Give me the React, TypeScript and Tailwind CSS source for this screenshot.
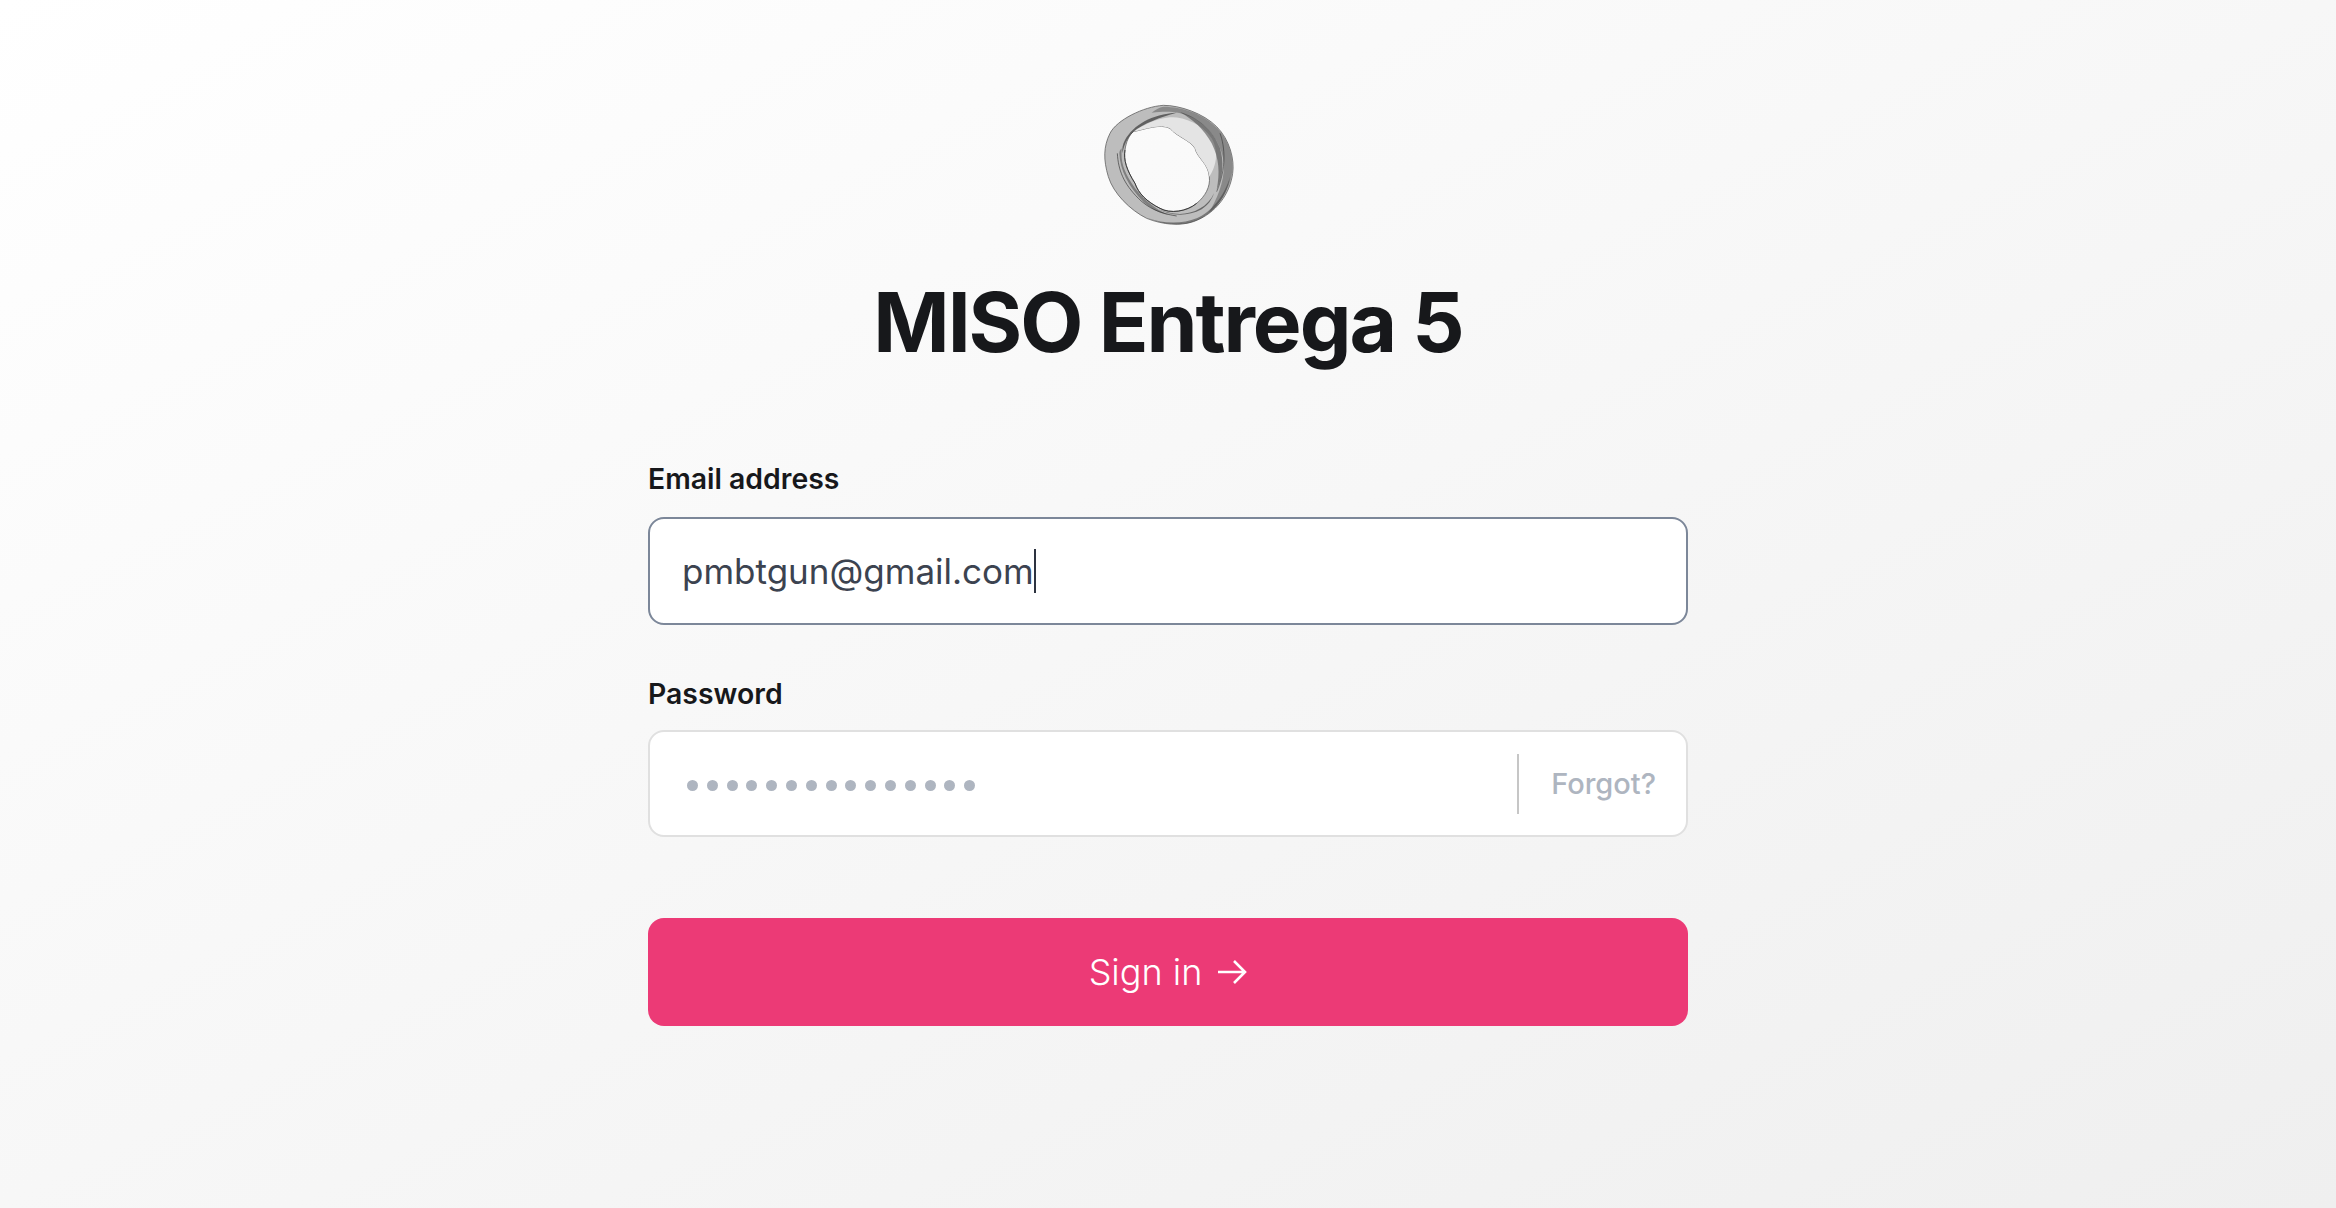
import React from "react";

const outer = "M250 46C300 46 370 70 410 110C450 150 464 210 458 250C450 310 410 370 340 395C300 408 250 405 200 385C150 360 100 310 85 260C70 210 70 170 90 130C110 90 190 50 250 46Z";
const hole = "M160 125C195 118 240 100 270 115C290 140 330 150 345 175C352 205 385 220 388 260C392 290 375 320 350 340C320 365 270 372 240 355C200 335 175 310 165 280C140 240 130 210 135 180C138 155 148 135 160 125Z";

function Logo() {
  return (
    <svg width="180" height="150" viewBox="-6 0 540 450" className="block blur-[0.4px]">
      <path d={`${outer}${hole}`} fillRule="evenodd" fill="#bdbdbd" stroke="#666" strokeWidth="2.5" />
      <path d="M270 115C290 140 330 150 345 175C352 205 385 220 388 260C405 235 420 190 395 145C365 100 310 80 270 82C230 85 190 105 160 125C195 118 240 100 270 115Z" fill="#e4e4e4" />
      <path d="M250 50C310 50 375 75 412 115C450 155 462 210 456 250C448 300 420 345 385 370C410 330 432 280 432 225C428 165 390 110 335 82C300 66 270 62 215 68C225 60 238 52 250 50Z" fill="#555" opacity="0.5" />
      <path d="M300 66C350 80 400 120 420 175C432 215 430 260 410 300C420 250 418 205 395 160C370 115 340 90 300 66Z" fill="#222" opacity="0.45" />
      <path d="M135 150C160 105 215 72 290 68C240 82 190 100 160 125C140 145 130 170 128 190C125 178 128 163 135 150Z" fill="#222" opacity="0.6" />
      <path d="M118 190C120 240 145 290 190 335C215 358 240 370 270 376C225 360 180 320 155 280C130 240 122 215 125 175C120 180 118 185 118 190Z" fill="#333" opacity="0.45" />
      <path d="M205 385C250 402 310 402 350 385C395 365 435 315 450 260C440 325 395 380 330 398C285 408 240 400 205 385Z" fill="#333" opacity="0.5" />
      <path d="M230 355C270 378 320 382 365 358C385 345 395 330 402 310C385 350 340 372 300 372C275 372 250 365 230 355Z" fill="#111" opacity="0.5" />
      <path d="M135 180C130 210 140 240 165 280C175 310 200 335 240 355C270 372 320 365 350 340" fill="none" stroke="#222" strokeWidth="3" opacity="0.75" />
      <path d="M112 190C115 240 130 280 175 325C205 355 240 370 290 378" fill="none" stroke="#222" strokeWidth="2.5" opacity="0.7" />
      <path d="M420 130C435 170 440 235 410 305" fill="none" stroke="#222" strokeWidth="2.5" opacity="0.6" />
    </svg>
  );
}

export default function App() {
  return (
    <div className="min-h-[1208px] bg-linear-to-br from-white to-[#efefef] font-['Inter',sans-serif] flex flex-col items-center pt-[90px] text-[#17181b]">
      <Logo />
      <h1 className="mt-[33px] text-[82px] leading-[100px] font-bold tracking-[-0.025em]">MISO Entrega 5</h1>
      <form className="w-[1040px] mt-[86px] flex flex-col">
        <label className="text-[28.4px] leading-[40px] font-semibold">Email address</label>
        <div className="mt-[18px] h-[108px] rounded-[16px] border-2 border-[#7c8799] bg-white pl-[32px] flex items-center text-[35px] text-[#3c4350]">
          <span>pmbtgun@gmail.com</span>
          <span className="w-[2px] h-[44px] bg-[#2d3340]" />
        </div>
        <label className="mt-[49px] text-[28.4px] leading-[40px] font-semibold">Password</label>
        <div className="mt-[16px] h-[107px] rounded-[16px] border-2 border-[#e0e0e0] bg-white pl-[37px] pr-[30px] flex items-center">
          <div className="flex gap-[8.8px] mt-[4px]">
            {Array.from({ length: 15 }).map((_, i) => (
              <span key={i} className="w-[11px] h-[11px] rounded-full bg-[#aeb5c0]" />
            ))}
          </div>
          <div className="ml-auto w-[2px] h-[60px] bg-[#c6c6c6]" />
          <span className="ml-[32px] text-[29px] font-medium text-[#aeb5c0]">Forgot?</span>
        </div>
        <button type="button" className="mt-[81px] h-[108px] rounded-[16px] bg-[#ec3a76] text-white text-[36px] font-light flex items-center justify-center gap-[15px]">
          <span>Sign in</span>
          <svg width="30" height="26" viewBox="0 0 30 26" fill="none" stroke="white" strokeWidth="2.6">
            <path d="M1 13H28M17 2L28 13L17 24" />
          </svg>
        </button>
      </form>
    </div>
  );
}
